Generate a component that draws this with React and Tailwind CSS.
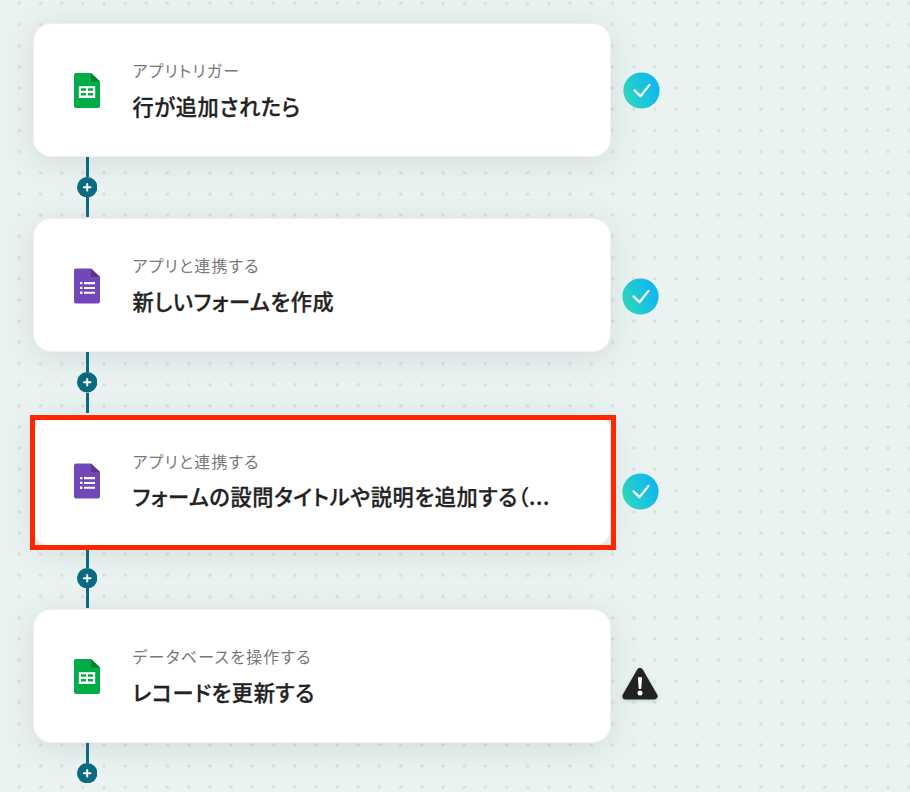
import clsx from 'clsx'

const steps = [
    { id: 1, icon: 'sheet', label: 'アプリトリガー', title: '行が追加されたら', status: 'ok', statusClass: 'ml-3 pt-[49px]' },
    { id: 2, icon: 'form', label: 'アプリと連携する', title: '新しいフォームを作成', status: 'ok', statusClass: 'ml-[10.5px] pt-[59.5px]' },
    { id: 3, icon: 'form', label: 'アプリと連携する', title: 'フォームの設問タイトルや説明を追加する（...', status: 'ok', statusClass: 'ml-[10.5px] pt-[59.2px]', selected: true },
    { id: 4, icon: 'sheet', label: 'データベースを操作する', title: 'レコードを更新する', status: 'warn', statusClass: 'ml-[10px] pt-[58px]' },
]

function SheetIcon() {
    return (
        <svg width="26" height="36" viewBox="0 0 26 36" className="block mt-[2px]">
            <path d="M2 0h15l9 8.5V33a2 2 0 0 1-2 2H2a2 2 0 0 1-2-2V2a2 2 0 0 1 2-2Z" fill="#00ac47" />
            <path d="M17 0 26 8.5h-9Z" fill="#00832d" />
            <rect x="4.8" y="13.2" width="16.4" height="11.8" fill="#fff" />
            <path d="M7 15.3h5v2.4H7zM14 15.3h5v2.4h-5zM7 20h5v2.5H7zM14 20h5v2.5h-5z" fill="#00ac47" />
        </svg>
    )
}

function FormIcon() {
    return (
        <svg width="26" height="36" viewBox="0 0 26 36" className="block mt-px">
            <path d="M2 .5h15l9 8.5v24.5a2 2 0 0 1-2 2H2a2 2 0 0 1-2-2v-31a2 2 0 0 1 2-2Z" fill="#7248b9" />
            <path d="M17 .5 26 9h-9Z" fill="#56378a" />
            <path d="M6 14h2.4v2.3H6zM10 14h11v2.2H10zM6 18.8h2.4v2.3H6zM10 18.9h11v2.1H10zM6 23.6h2.4v2.3H6zM10 23.7h11v2.1H10z" fill="#fff" />
        </svg>
    )
}

function CheckBadge() {
    return (
        <svg width="37" height="37" viewBox="0 0 37 37" className="block">
            <defs>
                <linearGradient id="ok" x1="0" y1="0.75" x2="1" y2="0.35">
                    <stop offset="0.05" stopColor="#2ed9c0" />
                    <stop offset="0.85" stopColor="#10b9ec" />
                </linearGradient>
            </defs>
            <circle cx="18.5" cy="18.5" r="18.1" fill="url(#ok)" />
            <path d="m11.6 18.4 5.9 5.9 9-11.4" fill="none" stroke="#fff" strokeWidth="2.2" strokeLinecap="round" strokeLinejoin="round" />
        </svg>
    )
}

function WarningIcon() {
    return (
        <svg width="38" height="34" viewBox="0 0 38 34" className="block drop-shadow-sm">
            <path d="M19 4.2 33.4 29.2H4.6Z" fill="#222" stroke="#222" strokeWidth="6.4" strokeLinejoin="round" />
            <path d="M16.9 10.6q2.1-1 4.2 0l-.8 10.9q-1.3 1.2-2.6 0Z" fill="#fff" />
            <circle cx="19" cy="26" r="2.5" fill="#fff" />
        </svg>
    )
}

function Connector({ last }) {
    return (
        <div className="ml-[44px] w-[20.4px] h-[61.9px] flex flex-col items-center">
            <div className="w-[3px] h-[20.3px] shrink-0 bg-[#0b6b83]"></div>
            <svg width="20.4" height="20.4" viewBox="0 0 20.4 20.4" className="block shrink-0">
                <circle cx="10.2" cy="10.2" r="10.2" fill="#0b6b83" />
                <path d="M10.2 6.9v6.6M6.9 10.2h6.6" stroke="#fff" strokeWidth="2" strokeLinecap="round" />
            </svg>
            {!last && <div className="w-[3px] h-[20.3px] shrink-0 bg-[#0b6b83]"></div>}
        </div>
    )
}

function StepCard({ step }) {
    return (
        <div className="relative w-[578px] h-[133.5px] shrink-0">
            <div className="h-full flex items-center pl-[40px] bg-white border border-[#eff1f1] rounded-[18px] shadow-[0_5px_32px_rgba(60,80,75,0.13)]">
                {step.icon === 'sheet' ? <SheetIcon /> : <FormIcon />}
                <div className="ml-[32.5px] whitespace-nowrap [font-feature-settings:'palt']">
                    <p className="pt-px text-[15.9px] leading-6 tracking-[0.083em] text-[#777]">{step.label}</p>
                    <p className="mt-[6.5px] text-[21.2px] leading-8 font-medium tracking-[0.031em] text-[#222] [-webkit-text-stroke:0.3px_#222]">{step.title}</p>
                </div>
            </div>
            {step.selected && (
                <div className="absolute -left-[3px] top-[1px] w-[586px] h-[135px] border-5 border-[#ff2600]"></div>
            )}
        </div>
    )
}

function App() {
    return (
        <div
            lang="ja"
            className="w-full h-[792px] overflow-hidden bg-[#eaf3f2] bg-[radial-gradient(circle_at_center,#d8dedd_1.2px,transparent_2.1px)] bg-[length:21.2px_21.2px] bg-[position:8.7px_-7.3px] pl-[33px] pt-[23px] font-['Noto_Sans_CJK_JP',sans-serif]"
        >
            {steps.map((step, i) => (
                <div key={step.id}>
                    <div className="flex items-start">
                        <StepCard step={step} />
                        <div className={clsx('shrink-0', step.statusClass)}>
                            {step.status === 'ok' ? <CheckBadge /> : <WarningIcon />}
                        </div>
                    </div>
                    <Connector last={i === steps.length - 1} />
                </div>
            ))}
        </div>
    )
}

export default App;
